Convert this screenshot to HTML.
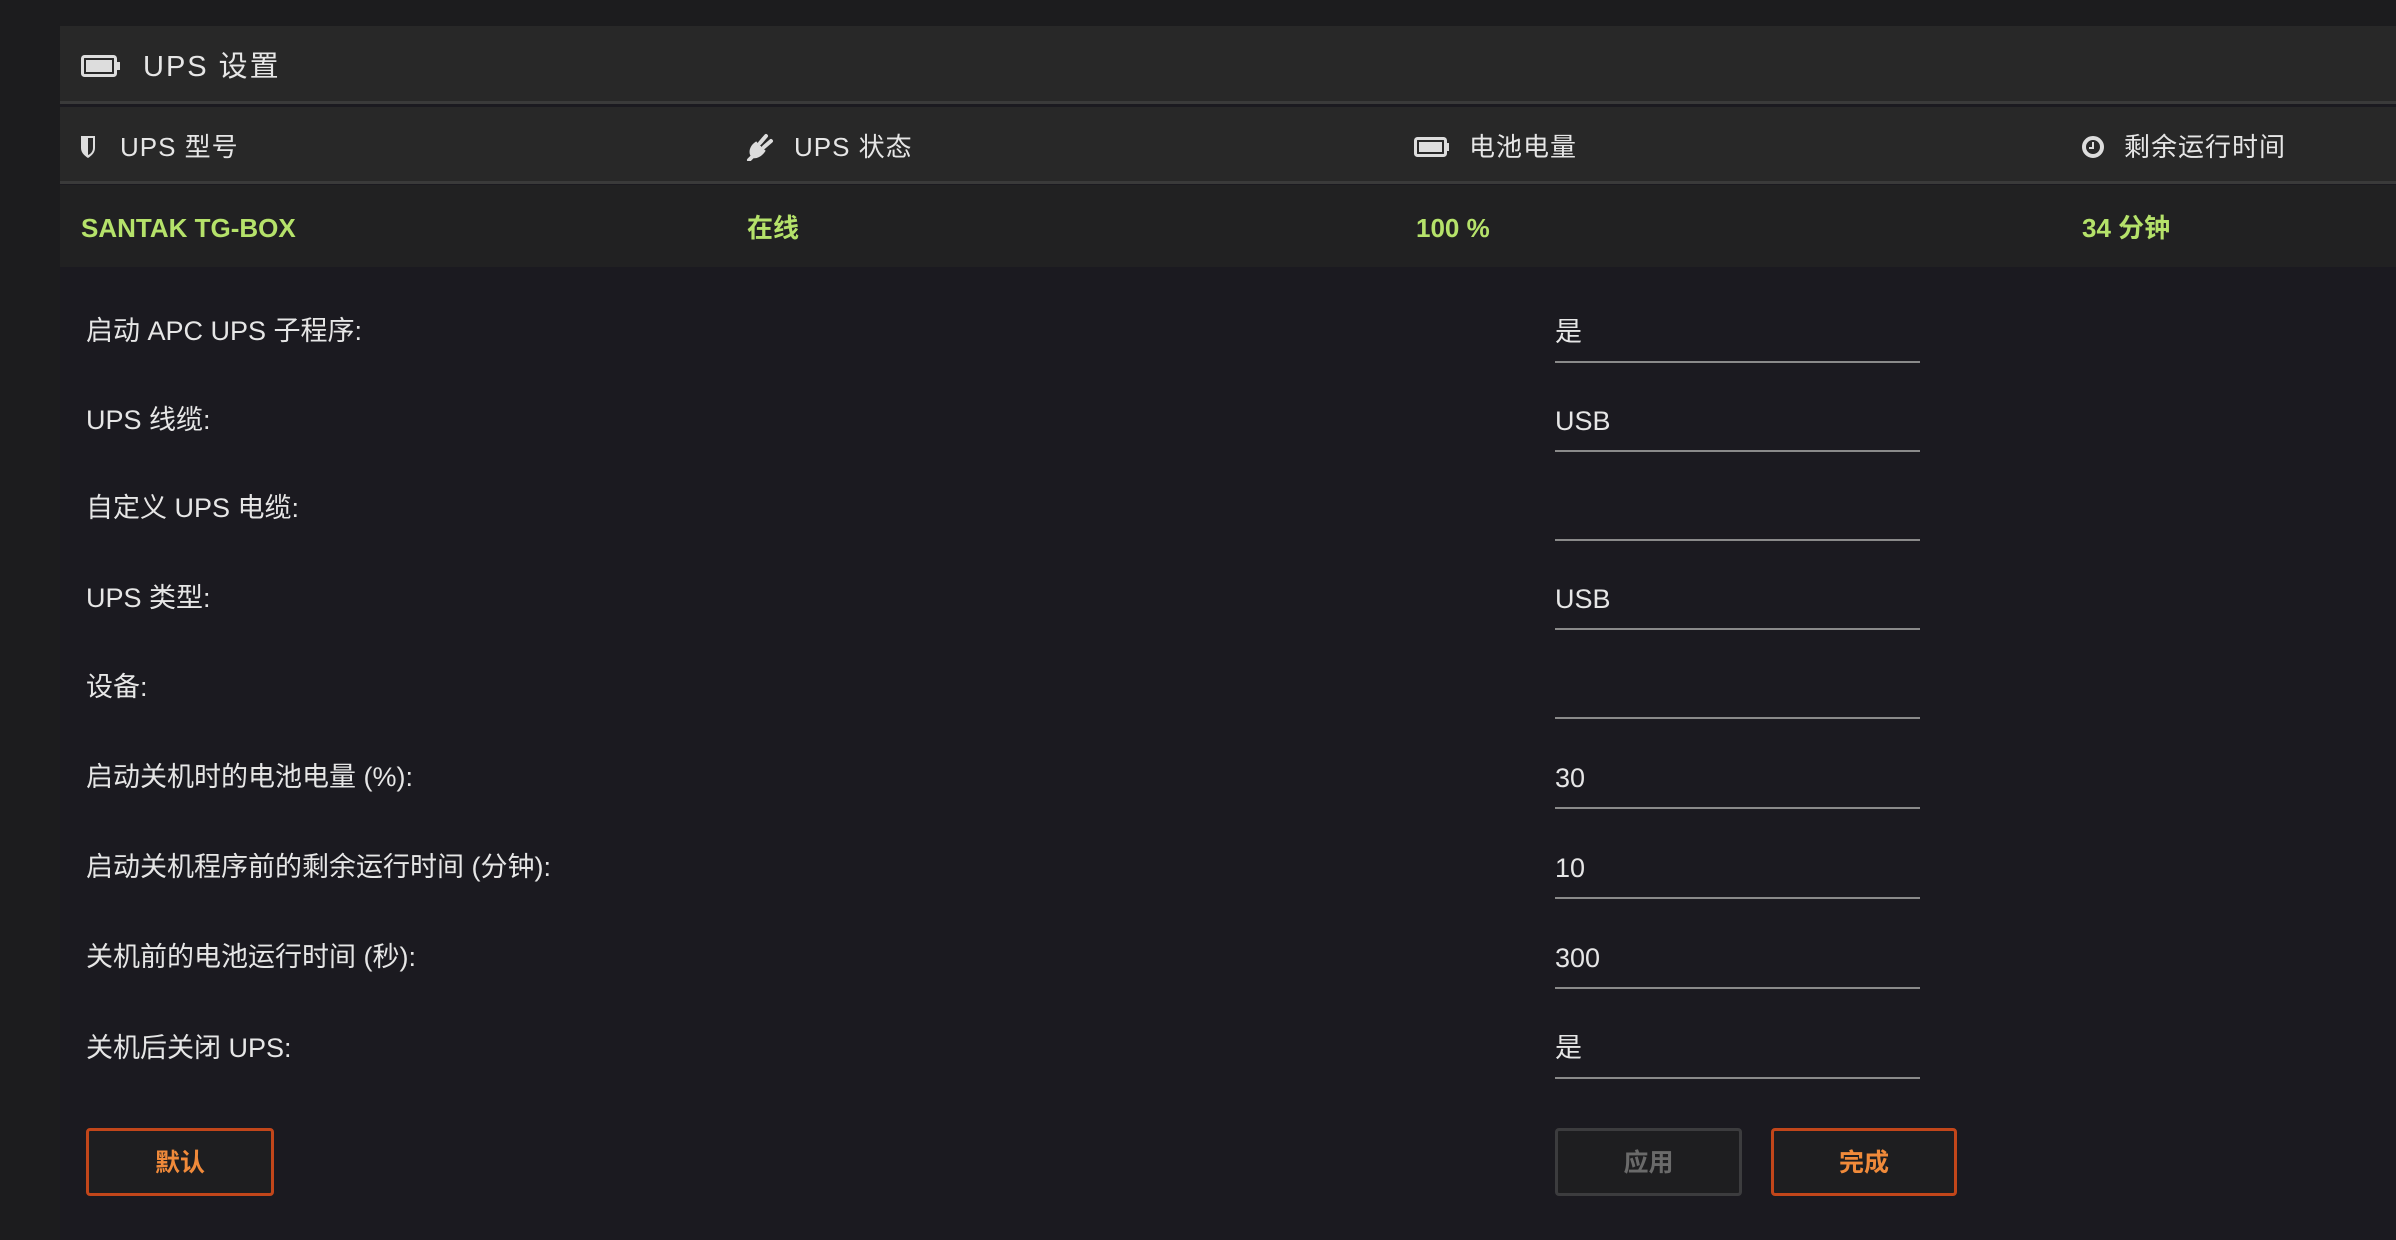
<!DOCTYPE html>
<html><head><meta charset="utf-8"><style>
*{margin:0;padding:0;box-sizing:border-box}
body{width:2396px;height:1240px;background:#1c1c1e;font-family:"Liberation Sans","Noto Sans CJK SC",sans-serif;color:#e8e8e8;position:relative;overflow:hidden}
.panel{position:absolute;left:60px;top:26px;right:0;bottom:0;background:#1b1a20}
.title{position:absolute;left:0;right:0;top:0;height:78px;background:#282828;border-bottom:3px solid #3a3a3a}
.title span{position:absolute;left:83px;top:23px;font-size:29px;line-height:36px;letter-spacing:2px;color:#e6e6e6}
.hdr{position:absolute;left:0;right:0;top:81px;height:77px;background:#282828;border-bottom:3px solid #3a3a3a}
.vals{position:absolute;left:0;right:0;top:159px;height:82px;background:#212122}
.h{position:absolute;top:104px;font-size:26px;line-height:34px;color:#e6e6e6;letter-spacing:1px}
.v{position:absolute;top:26px;font-size:26px;line-height:34px;color:#b5e26a;font-weight:bold}
.lbl{position:absolute;left:26px;font-size:27px;line-height:34px;color:#e6e6e6}
.inp{position:absolute;left:1495px;width:365px;height:60px;border-bottom:2px solid #8a8a8a;font-size:27px;line-height:34px;color:#e6e6e6;padding-top:12px}
.btn{position:absolute;top:1102px;height:68px;border:3px solid #c2461a;border-radius:4px;background:#1e1e20;color:#f08a3a;font-size:25px;font-weight:bold;text-align:center;line-height:64px}
svg{position:absolute}
</style></head><body>
<div class="panel">
 <div class="title">
  <svg style="left:21px;top:29px" width="40" height="22" viewBox="0 0 40 22"><rect x="1.5" y="1.5" width="33" height="19" rx="2" fill="none" stroke="#ddd" stroke-width="3"/><rect x="5" y="5" width="26" height="12" fill="#ddd"/><rect x="35" y="7" width="4" height="8" fill="#ddd"/></svg>
  <span>UPS 设置</span>
 </div>
 <div class="hdr"></div>
 <svg style="left:20px;top:109px" width="16" height="24" viewBox="0 0 16 24"><path d="M1 1h14v12c0 5-4 8-7 10C5 21 1 18 1 13z" fill="#ddd"/><path d="M8 3h5v10c0 3-2 6-5 7z" fill="#282828"/></svg>
 <div class="h" style="left:60px">UPS 型号</div>
 <svg style="left:686px;top:107px" width="28" height="28" viewBox="0 0 28 28"><path d="M3 27l6-6M7 23c-3-4-1-9 3-12l7 7c-3 4-7 6-10 5zM14 10l6-7M18 14l7-6" stroke="#ddd" stroke-width="4" fill="#ddd" stroke-linecap="round"/></svg>
 <div class="h" style="left:734px">UPS 状态</div>
 <svg style="left:1354px;top:111px" width="36" height="20" viewBox="0 0 36 20"><rect x="1.5" y="1.5" width="30" height="17" rx="2" fill="none" stroke="#ddd" stroke-width="3"/><rect x="5" y="5" width="23" height="10" fill="#ddd"/><rect x="32" y="6" width="3" height="8" fill="#ddd"/></svg>
 <div class="h" style="left:1409px">电池电量</div>
 <svg style="left:2021px;top:109px" width="24" height="24" viewBox="0 0 24 24"><circle cx="12" cy="12" r="9" fill="none" stroke="#ddd" stroke-width="4"/><path d="M12 7v6h-4" stroke="#ddd" stroke-width="2" fill="none"/></svg>
 <div class="h" style="left:2064px">剩余运行时间</div>
 <div class="vals">
  <div class="v" style="left:21px">SANTAK TG-BOX</div>
  <div class="v" style="left:687px">在线</div>
  <div class="v" style="left:1356px">100 %</div>
  <div class="v" style="left:2022px">34 分钟</div>
 </div>
 <div class="lbl" style="top:288px">启动 APC UPS 子程序:</div><div class="inp" style="top:277px">是</div>
 <div class="lbl" style="top:377px">UPS 线缆:</div><div class="inp" style="top:366px">USB</div>
 <div class="lbl" style="top:465px">自定义 UPS 电缆:</div><div class="inp" style="top:455px"></div>
 <div class="lbl" style="top:555px">UPS 类型:</div><div class="inp" style="top:544px">USB</div>
 <div class="lbl" style="top:644px">设备:</div><div class="inp" style="top:633px"></div>
 <div class="lbl" style="top:734px">启动关机时的电池电量 (%):</div><div class="inp" style="top:723px">30</div>
 <div class="lbl" style="top:824px">启动关机程序前的剩余运行时间 (分钟):</div><div class="inp" style="top:813px">10</div>
 <div class="lbl" style="top:914px">关机前的电池运行时间 (秒):</div><div class="inp" style="top:903px">300</div>
 <div class="lbl" style="top:1005px">关机后关闭 UPS:</div><div class="inp" style="top:993px">是</div>
 <div class="btn" style="left:26px;width:188px">默认</div>
 <div class="btn" style="left:1495px;width:187px;border-color:#3c3c3e;color:#6a6a6a">应用</div>
 <div class="btn" style="left:1711px;width:186px">完成</div>
</div>
</body></html>
